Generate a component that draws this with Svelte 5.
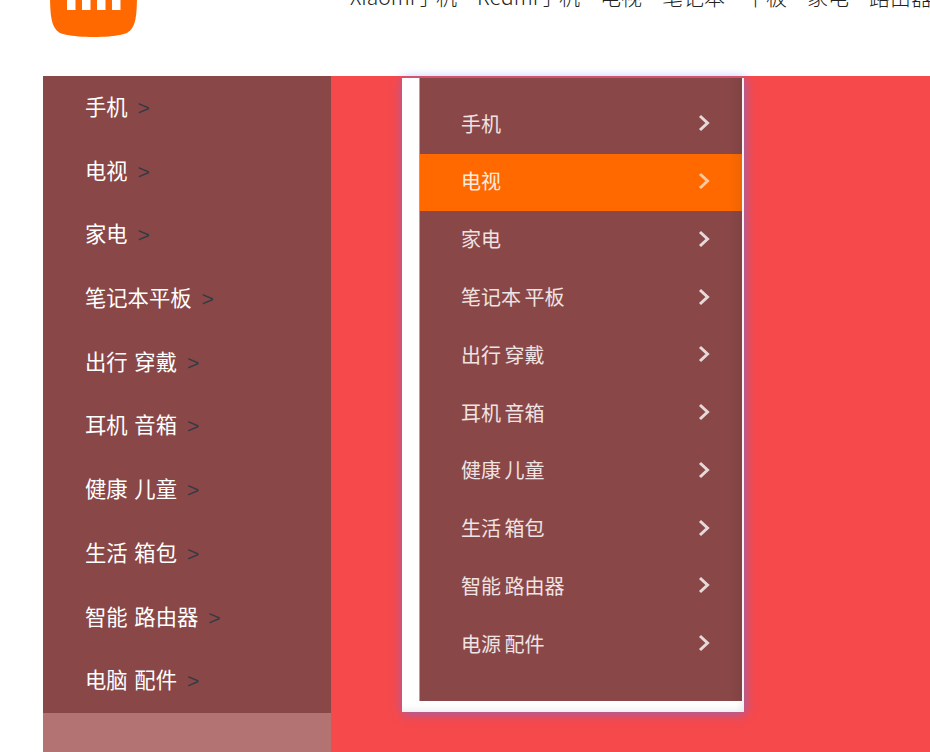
<script>
  const nav = ['Xiaomi手机', 'Redmi手机', '电视', '笔记本', '平板', '家电', '路由器'];
  const side = ['手机', '电视', '家电', '笔记本平板', '出行 穿戴', '耳机 音箱', '健康 儿童', '生活 箱包', '智能 路由器', '电脑 配件'];
  const menu = ['手机', '电视', '家电', '笔记本 平板', '出行 穿戴', '耳机 音箱', '健康 儿童', '生活 箱包', '智能 路由器', '电源 配件'];
</script>

<div class="page">
  <header class="top">
    <svg class="logo" viewBox="0 0 87 87" aria-hidden="true">
      <path fill="#ff6900" d="M43.500 0C62 0 73 1 79 8s8 17 8 35.500-1 27-4 33-8 7.500-13 8.500-16 2-26.500 2-21-1-26.500-2-10-2.500-13-8.500S0 62 0 43.500 2 14 8 8 25 0 43.500 0Z" />
      <rect x="17" y="20" width="8.500" height="40" fill="#fff" />
      <rect x="32" y="20" width="8.500" height="40" fill="#fff" />
      <rect x="47" y="20" width="8.500" height="40" fill="#fff" />
      <rect x="62" y="20" width="8.500" height="40" fill="#fff" />
    </svg>
    <nav class="nav">
      {#each nav as item}
        <span>{item}</span>
      {/each}
    </nav>
  </header>

  <section class="hero">
    <aside class="side">
      <ul class="side-list">
        {#each side as item}
          <li>{item}<i>&gt;</i></li>
        {/each}
      </ul>
      <div class="side-rest"></div>
    </aside>

    <div class="popup">
      <ul class="menu">
        {#each menu as item, i}
          <li class:active={i === 1}>
            <span>{item}</span>
            <svg viewBox="0 0 12 18" aria-hidden="true"><path d="M2 2l7.500 7-7.500 7" /></svg>
          </li>
        {/each}
      </ul>
    </div>
  </section>
</div>

<style>
  :global(body) {
    margin: 0;
    background: #fff;
    overflow: hidden;
  }
  .page {
    width: 930px;
    height: 752px;
    overflow: hidden;
    font-family: "Noto Sans CJK SC", "Liberation Sans", sans-serif;
  }
  .top {
    height: 76px;
    display: flex;
    align-items: flex-start;
    padding-left: 50px;
    overflow: hidden;
  }
  .logo {
    flex: none;
    width: 87px;
    height: 87px;
    margin-top: -50px;
  }
  .nav {
    display: flex;
    gap: 20px;
    margin-left: 213px;
    margin-top: -19px;
    font-size: 21px;
    line-height: 30px;
    font-weight: 300;
    color: #222;
    white-space: nowrap;
  }
  .hero {
    position: relative;
    height: 676px;
    margin-left: 43px;
    background: #f6494c;
  }
  .side {
    width: 288px;
    height: 100%;
    display: flex;
    flex-direction: column;
  }
  ul {
    list-style: none;
    margin: 0;
    padding: 0;
  }
  .side-list {
    background: #8a4747;
    height: 637px;
    flex: none;
  }
  .side-list li {
    height: 63.700px;
    line-height: 60px;
    padding-left: 42px;
    font-size: 21.300px;
    word-spacing: 2px;
    color: #fff;
  }
  .side-list i {
    font-style: normal;
    font-family: "Liberation Sans", sans-serif;
    font-weight: 300;
    font-size: 21px;
    margin-left: 10px;
    color: #353a44;
  }
  .side-rest {
    flex: 1;
    background: #b37373;
  }
  .popup {
    position: absolute;
    left: 359px;
    top: 2px;
    width: 342px;
    height: 634px;
    box-sizing: border-box;
    padding: 0 2px 11px 17px;
    background: #fff;
    box-shadow: 1px 1px 10px rgba(80, 120, 255, 0.65), inset -8px -8px 10px -8px rgba(0, 0, 0, 0.12);
  }
  .menu {
    height: 100%;
    box-sizing: border-box;
    padding-top: 18px;
    background: linear-gradient(to right, #8a4747 96%, #7f4343);
    border-left: 1px solid #a9a0a8;
    color: #efe3e3;
    font-size: 20px;
    word-spacing: -1px;
  }
  .menu li {
    height: 57.750px;
    box-sizing: border-box;
    padding: 0 32px 3px 41px;
    display: flex;
    align-items: center;
    justify-content: space-between;
  }
  .menu li.active {
    height: 57px;
    background: linear-gradient(to right, #ff6900 96%, #ee6502);
    color: #ffeee0;
    margin-bottom: 0.750px;
  }
  .menu svg {
    width: 12px;
    height: 18px;
    fill: none;
    stroke: #e6d9d9;
    stroke-width: 3;
  }
  .menu li.active svg {
    stroke: #ffc9a0;
  }
</style>
